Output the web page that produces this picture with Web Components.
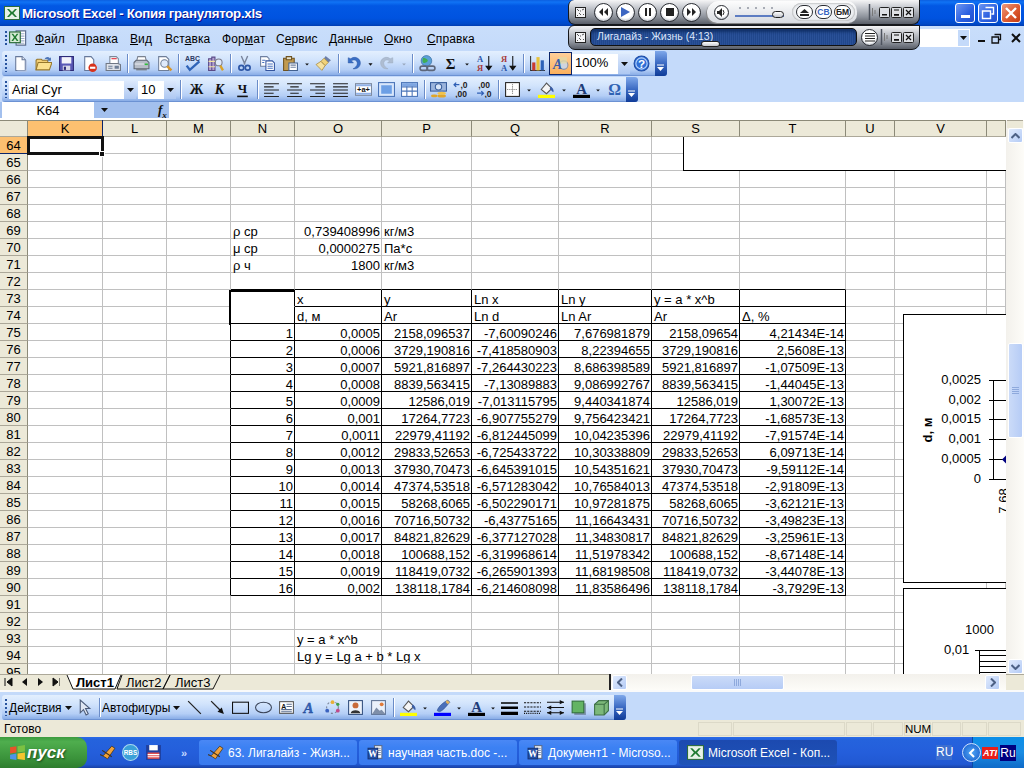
<!DOCTYPE html>
<html lang="ru"><head><meta charset="utf-8"><title>Excel</title>
<style>
html,body{margin:0;padding:0;width:1024px;height:768px;overflow:hidden;background:#C4DAFA}
body{font:12px "Liberation Sans",Arial,sans-serif;color:#000;display:flex;flex-direction:column;position:relative}
</style></head><body>
<x-titlebar>Microsoft Excel - Копия гранулятор.xls</x-titlebar>
<x-menubar>
 <x-menu-item w="42"><u>Ф</u>айл</x-menu-item><x-menu-item w="53"><u>П</u>равка</x-menu-item><x-menu-item w="35"><u>В</u>ид</x-menu-item><x-menu-item w="57">Вст<u>а</u>вка</x-menu-item><x-menu-item w="54">Фор<u>м</u>ат</x-menu-item><x-menu-item w="53">С<u>е</u>рвис</x-menu-item><x-menu-item w="55"><u>Д</u>анные</x-menu-item><x-menu-item w="43"><u>О</u>кно</x-menu-item><x-menu-item w="60"><u>С</u>правка</x-menu-item>
</x-menubar>
<x-toolband>
 <x-toolbar end="667">
  <x-tool i="new"></x-tool><x-tool i="open"></x-tool><x-tool i="save"></x-tool><x-tool i="perm"></x-tool><x-tool i="mail"></x-tool><x-sep w="6"></x-sep>
  <x-tool i="print"></x-tool><x-tool i="preview"></x-tool><x-sep w="5"></x-sep><x-tool i="spell"></x-tool><x-tool i="research"></x-tool><x-sep w="6"></x-sep>
  <x-tool i="cut"></x-tool><x-tool i="copy"></x-tool><x-tool i="paste"></x-tool><x-tool i="drop" w="10"></x-tool><x-tool i="brush"></x-tool><x-sep w="7"></x-sep>
  <x-tool i="undo"></x-tool><x-tool i="drop" w="11"></x-tool><x-tool i="redo"></x-tool><x-tool i="dropg" w="10"></x-tool><x-sep w="7"></x-sep>
  <x-tool i="link"></x-tool><x-tool i="sum"></x-tool><x-tool i="drop" w="10"></x-tool><x-tool i="az" w="25"></x-tool><x-tool i="za"></x-tool><x-sep w="6"></x-sep>
  <x-tool i="chart"></x-tool><x-tool i="draw" active></x-tool><x-combo w="58" aw="12" h="20">100%</x-combo><x-tool i="help"></x-tool>
 </x-toolbar>
 <x-toolbar end="638">
  <x-combo w="127" aw="12" h="18">Arial Cyr</x-combo><x-combo w="38" aw="12" h="18" style="margin-left:2px">10</x-combo><x-sep w="8"></x-sep>
  <x-tool i="bold" w="24"></x-tool><x-tool i="ital" w="22"></x-tool><x-tool i="under" w="24"></x-tool><x-sep w="6"></x-sep>
  <x-tool i="al"></x-tool><x-tool i="ac"></x-tool><x-tool i="ar"></x-tool><x-tool i="aj"></x-tool><x-tool i="merge"></x-tool><x-tool i="cur1"></x-tool><x-tool i="cur2"></x-tool><x-sep w="6"></x-sep>
  <x-tool i="money"></x-tool><x-tool i="inc"></x-tool><x-tool i="dec"></x-tool><x-sep w="5"></x-sep>
  <x-tool i="border"></x-tool><x-tool i="drop" w="10"></x-tool><x-tool i="fill" w="25"></x-tool><x-tool i="drop" w="10"></x-tool><x-tool i="color" w="24"></x-tool><x-tool i="drop" w="10"></x-tool><x-tool i="omega"></x-tool>
 </x-toolbar>
</x-toolband>
<x-formula>K64</x-formula>
<x-workarea><x-sheet></x-sheet><x-vscroll></x-vscroll></x-workarea>
<x-tabstrip></x-tabstrip>
<x-drawband>
 <x-toolbar end="626">
  <x-textbtn w="63">Дейс<u>т</u>вия<x-caret></x-caret></x-textbtn><x-tool i="pointer" w="24"></x-tool><x-sep w="6"></x-sep><x-textbtn w="81">Автофи<u>г</u>уры<x-caret></x-caret></x-textbtn>
  <x-tool i="line"></x-tool><x-tool i="arrow"></x-tool><x-tool i="rect"></x-tool><x-tool i="oval"></x-tool><x-tool i="textbox"></x-tool><x-tool i="wordart"></x-tool><x-tool i="diagram"></x-tool><x-tool i="clip"></x-tool><x-tool i="pic"></x-tool><x-sep w="6"></x-sep>
  <x-tool i="fill" w="24"></x-tool><x-tool i="drop" w="10"></x-tool><x-tool i="pen" w="24"></x-tool><x-tool i="drop" w="10"></x-tool><x-tool i="color" w="24"></x-tool><x-tool i="drop" w="10"></x-tool>
  <x-tool i="lw"></x-tool><x-tool i="dash"></x-tool><x-tool i="arrows"></x-tool><x-tool i="shadow"></x-tool><x-tool i="cube"></x-tool>
 </x-toolbar>
</x-drawband>
<x-statusbar>Готово</x-statusbar>
<x-taskbar>
 <x-task icon="winamp">63. Лигалайз - Жизн...</x-task><x-task icon="word">научная часть.doc -...</x-task><x-task icon="word">Документ1 - Microso...</x-task><x-task icon="excel" active>Microsoft Excel - Коп...</x-task>
</x-taskbar>
<x-player></x-player>
<script>
const I={
new:'<path d="M3.500 1.500h6l3 3v10h-9z" fill="#fff" stroke="#66789a"/><path d="M9.500 1.500v3h3" fill="#dfe6f2" stroke="#66789a"/><path d="M13.500 5v10H5" fill="none" stroke="#b5c4e0"/>',
open:'<path d="M1 14V5l1-1h4l1 1h5v2" fill="#f3cf76" stroke="#96772c"/><path d="M1 14l2-7h13l-2.500 7z" fill="#fbe08e" stroke="#96772c"/><path d="M9 4c1-2.500 3.500-3 5-1l1-1v3.500h-3.500l1-1c-1-1-2.500-1-3.500-.5z" fill="#4e76b8"/>',
save:'<path d="M1.500 1.500h13v13h-13z" fill="#5a58b6" stroke="#2c2a78"/><path d="M3.500 2h9v6h-9z" fill="#f2f2fa"/><path d="M4.500 10h7v4.500h-7z" fill="#d8d8e8"/><path d="M5.500 11h2v3h-2z" fill="#2c2a78"/>',
perm:'<path d="M3.500 1.500h6l2.500 3v5H9v5H3.500z" fill="#fff" stroke="#66789a"/><circle cx="11" cy="12" r="4" fill="#d8321c"/><path d="M8.500 11h5v2h-5z" fill="#fff"/>',
mail:'<path d="M5.500 1.500h6l2 2v5h-8z" fill="#fff" stroke="#7b8798"/><path d="M7 3.500h5" stroke="#d23" /><path d="M2 8h11l2.500 1v5.500h-13.500z" fill="#dfe3ea" stroke="#6f7784"/><path d="M4 10h4v1H4zM4 12h4v1H4zM10 10h4v3h-4z" fill="#6f7f97"/>',
print:'<path d="M4.500 1.500h7l1 4h-9z" fill="#fff" stroke="#7a8290"/><path d="M1 7l2-2h10l2 2v6H1z" fill="#b8bec8" stroke="#5f6672"/><path d="M3 13h10v1.500H3z" fill="#787f8a"/><path d="M11 8h3v1.500h-3z" fill="#2ec13b"/><path d="M1.500 8h9v1h-9z" fill="#e5e8ee"/>',
preview:'<path d="M2.500 1.500h7l2.500 2.500v10.500h-9.500z" fill="#fff" stroke="#6f7e98"/><circle cx="8" cy="8" r="3.500" fill="#dfeafb" stroke="#6f7e98"/><path d="M10.500 10.500l4 4" stroke="#d9962a" stroke-width="2.400"/>',
spell:'<text x="1" y="6" font-family="Liberation Sans" font-size="6.500" font-weight="700" fill="#2d3a63">ABC</text><path d="M2.500 10l3 4 9-8" fill="none" stroke="#2f63b7" stroke-width="2.200"/>',
research:'<path d="M1.500 3.500h3v11h-3zM4.500 2h3v12.500h-3z" fill="#b3a0d2" stroke="#5a4a86"/><path d="M1.500 6h6M1.500 11h6" stroke="#f4e7a1"/><circle cx="11" cy="7" r="3.200" fill="#dfeafb" stroke="#7b7b8a"/><path d="M12.500 10l2.500 4.500" stroke="#d9a22a" stroke-width="2.200"/>',
cut:'<path d="M5 1l3.500 8M11 1L7.500 9" stroke="#78839a" stroke-width="1.300"/><circle cx="5" cy="12" r="2.300" fill="none" stroke="#2e57a6" stroke-width="1.600"/><circle cx="11" cy="12" r="2.300" fill="none" stroke="#2e57a6" stroke-width="1.600"/>',
copy:'<path d="M1.500 1.500h6l2 2v7h-8z" fill="#fff" stroke="#6f80a0"/><path d="M6.500 5.500h6l2 2v7h-8z" fill="#fff" stroke="#33549e"/><path d="M8 8.500h5M8 10.500h5M8 12.500h5M3 5h3M3 7h2" stroke="#4a73c0"/>',
paste:'<path d="M1.500 3h10v11.500h-10z" fill="#c19a4f" stroke="#6f5320"/><path d="M4 1.500h5v3H4z" fill="#e7e3ce" stroke="#6f5320"/><path d="M6.500 7.500h8v7h-8z" fill="#fff" stroke="#42608f"/><path d="M8 9.500h5M8 11.500h5" stroke="#6f80a0"/>',
brush:'<path d="M10 1l5 4-2.500 2-4-4z" fill="#6d7fa8"/><path d="M8.500 3l4 4-3 3-4-4z" fill="#f0d27a" stroke="#9a7a2b" stroke-width=".6"/><path d="M5.500 6l4 4-3 4.500L1 9z" fill="#f6e2a0" stroke="#a58434" stroke-width=".7"/>',
undo:'<path d="M3 2.500v5h5L6 5.500c3-2 6 0 5.500 3-.3 2-2 3.500-4 4.500 4 .5 7-2 7-5.500 0-4.500-5.500-7-9-4z" fill="#3a6fc6" stroke="#28529a" stroke-width=".4"/>',
redo:'<path d="M13 2.500v5H8l2-2c-3-2-6 0-5.500 3 .3 2 2 3.500 4 4.500-4 .5-7-2-7-5.500 0-4.500 5.500-7 9-4z" fill="#aebdd2" stroke="#98a6bb" stroke-width=".4"/>',
link:'<circle cx="7" cy="5.500" r="5" fill="#5aa0d8" stroke="#33689c" stroke-width=".6"/><path d="M4 2.500c2 0 3 1 4 2s-1 3-3 3-2-3-1-5z" fill="#3fae54"/><g fill="none" stroke="#5c667a" stroke-width="1.500"><rect x="1" y="10.500" width="7" height="4" rx="2"/><rect x="7.500" y="10.500" width="7.500" height="4" rx="2"/></g>',
sum:'<text x="8" y="13.500" text-anchor="middle" font-family="Liberation Serif" font-size="14" font-weight="700" fill="#111">Σ</text>',
az:'<text x="1" y="7" font-family="Liberation Serif" font-size="8" font-weight="700" fill="#2a55a8">А</text><text x="1" y="15" font-family="Liberation Serif" font-size="8" font-weight="700" fill="#a83a3a">Я</text><path d="M12 1v12M9.500 10.500L12 14l2.500-3.500z" fill="#111" stroke="#111"/>',
za:'<text x="1" y="7" font-family="Liberation Serif" font-size="8" font-weight="700" fill="#a83a3a">Я</text><text x="1" y="15" font-family="Liberation Serif" font-size="8" font-weight="700" fill="#2a55a8">А</text><path d="M12 1v12M9.500 10.500L12 14l2.500-3.500z" fill="#111" stroke="#111"/>',
chart:'<path d="M1.500 1v13.500H15" fill="none" stroke="#333"/><path d="M3 7h3v7.500H3z" fill="#c93a2e"/><path d="M7 2h3v12.500H7z" fill="#e8c23a"/><path d="M11 5h3v9.500h-3z" fill="#2d62b8"/>',
draw:'<circle cx="11" cy="9.500" r="4" fill="#cfd4df" stroke="#8c93a5"/><path d="M6 2h8v6H6z" fill="#e3d9a8" opacity=".8"/><text x="1" y="13.500" font-family="Liberation Serif" font-size="13" font-weight="700" font-style="italic" fill="#3a5ea8">A</text>',
help:'<circle cx="8" cy="8" r="7" fill="#2f6fd6" stroke="#1c4aa3"/><circle cx="8" cy="8" r="5.300" fill="none" stroke="#bcd6fa"/><text x="8" y="12" text-anchor="middle" font-family="Liberation Sans" font-size="11" font-weight="700" fill="#fff">?</text>',
bold:'<text x="8" y="12.500" text-anchor="middle" font-family="Liberation Serif" font-size="13" font-weight="700" fill="#111">Ж</text>',
ital:'<text x="8" y="12.500" text-anchor="middle" font-family="Liberation Serif" font-size="13" font-weight="700" font-style="italic" fill="#111">К</text>',
under:'<text x="8" y="11.500" text-anchor="middle" font-family="Liberation Serif" font-size="12" font-weight="700" fill="#111">Ч</text><path d="M3 14.500h10" stroke="#111" stroke-width="1.500"/>',
al:'<path d="M1 2.500h14M1 5.500h9M1 8.500h14M1 11.500h9M1 14.500h14" stroke="#222"/>',
ac:'<path d="M1 2.500h14M4 5.500h8M1 8.500h14M4 11.500h8M1 14.500h14" stroke="#222"/>',
ar:'<path d="M1 2.500h14M6 5.500h9M1 8.500h14M6 11.500h9M1 14.500h14" stroke="#222"/>',
aj:'<path d="M1 2.500h14M1 5.500h14M1 8.500h14M1 11.500h14M1 14.500h14" stroke="#222"/>',
merge:'<rect x=".5" y="2.500" width="15" height="11" fill="#fff" stroke="#7d8aa0"/><path d="M1 3h14v2H1zM1 11h14v2H1z" fill="#8fb0e6"/><text x="8" y="10.500" text-anchor="middle" font-family="Liberation Sans" font-size="7" font-weight="700" fill="#111">+a+</text>',
cur1:'<rect x=".5" y="1.500" width="15" height="13" fill="#d7e6fb" stroke="#4a74b8"/><path d="M3 4h10v8H3z" fill="#6c9fe5"/>',
cur2:'<rect x=".5" y="1.500" width="15" height="13" fill="#fff" stroke="#4a74b8"/><path d="M1 5.500h14M1 9.500h14M5.500 2v12M10.500 2v12" stroke="#4a74b8"/><path d="M1 2h14v3H1z" fill="#7ea6e2"/>',
money:'<rect x=".5" y="1.500" width="15" height="8" fill="#9bb4dc" stroke="#3a5f9e"/><circle cx="8" cy="5.500" r="3" fill="#d9e6f8" stroke="#3a5f9e"/><ellipse cx="11" cy="14" rx="4" ry="1.500" fill="#e1a62a"/><ellipse cx="11" cy="11.500" rx="4" ry="1.500" fill="#f3c34a"/><ellipse cx="4" cy="14" rx="3" ry="1.200" fill="#e1a62a"/>',
inc:'<text x="7" y="7" font-family="Liberation Sans" font-size="8" font-weight="700" fill="#222">,0</text><text x="2" y="15" font-family="Liberation Sans" font-size="8" font-weight="700" fill="#222">,00</text><path d="M6 3.500H1M3 1.500L1 3.500l2 2" fill="none" stroke="#2f5fb5" stroke-width="1.200"/>',
dec:'<text x="2" y="7" font-family="Liberation Sans" font-size="8" font-weight="700" fill="#222">,00</text><text x="8" y="15" font-family="Liberation Sans" font-size="8" font-weight="700" fill="#222">,0</text><path d="M1 11.500h6M5 9.500l2 2-2 2" fill="none" stroke="#2f5fb5" stroke-width="1.200"/>',
border:'<rect x="1.500" y="1.500" width="13" height="13" fill="#fff" stroke="#222"/><path d="M8 3v10M3 8h10" stroke="#777" stroke-dasharray="1 1"/>',
fill:'<path d="M3 8l5-6 5 5-5 5z" fill="#f5f5f5" stroke="#555"/><path d="M12 5c2 2 3 3 2.500 5.500-1.500-1-2.500-2-3.500-3.500z" fill="#3a5ea8"/><path d="M0 13h16v3H0z" fill="#ffff00"/>',
pen:'<path d="M3 11c1-4 6-8 10-10l2 2c-3 3-6 8-10 9z" fill="#4a6fb8" stroke="#2a4a8c" stroke-width=".5"/><path d="M12 1l3 2-2 2-2-2z" fill="#e4b45c"/><path d="M0 13h16v3H0z" fill="#0000ff"/>',
color:'<text x="8" y="12" text-anchor="middle" font-family="Liberation Serif" font-size="14" font-weight="700" fill="#1f3c78">A</text><path d="M0 13h16v3H0z" fill="#000"/>',
omega:'<text x="8" y="13.500" text-anchor="middle" font-family="Liberation Serif" font-size="15" font-weight="700" fill="#2f62b3">Ω</text>',
drop:'<path d="M2 6h6L5 9.500z" fill="#111" transform="translate(3 1)"/>',
dropg:'<path d="M2 6h6L5 9.500z" fill="#98a6bb" transform="translate(3 1)"/>',
pointer:'<path d="M4 1v12l3-3 2.500 5 2-1L9 9h4z" fill="#dfe6f2" stroke="#4a5a78"/>',
line:'<path d="M2 2l12 12" stroke="#222" stroke-width="1.200"/>',
arrow:'<path d="M2 2l10 10" stroke="#222" stroke-width="1.200"/><path d="M14 14l-6-2 4-4z" fill="#111"/>',
rect:'<rect x=".5" y="3" width="15" height="10.500" fill="none" stroke="#111"/>',
oval:'<ellipse cx="8" cy="8" rx="7.500" ry="5" fill="none" stroke="#3a4458"/>',
textbox:'<rect x="1.500" y="2.500" width="13" height="11" fill="#fff" stroke="#555"/><text x="3" y="9" font-family="Liberation Sans" font-size="6.500" font-weight="700" fill="#111">A</text><path d="M8 5h5M8 7h5M3 10h10M3 12h10" stroke="#5a6d8f"/>',
wordart:'<text x="7" y="13.500" text-anchor="middle" font-family="Liberation Serif" font-size="14" font-weight="700" font-style="italic" fill="#3463bb" stroke="#1a3f88" stroke-width=".3">A</text>',
diagram:'<circle cx="8" cy="8" r="5.500" fill="none" stroke="#7a8598" stroke-dasharray="2 2"/><circle cx="8" cy="3" r="1.800" fill="#e8b13a"/><circle cx="3" cy="11" r="1.800" fill="#3a62c0"/><circle cx="13" cy="11" r="1.800" fill="#c04a8a"/><circle cx="13" cy="5" r="1.500" fill="#3ea04a"/>',
clip:'<rect x="1.500" y="1.500" width="13" height="13" fill="#eef3fb" stroke="#34507f"/><circle cx="8" cy="6" r="2.800" fill="#c86a3a"/><path d="M3.500 13.500c0-4 9-4 9 0z" fill="#333"/>',
pic:'<rect x="1.500" y="1.500" width="13" height="13" fill="#eaf1fb" stroke="#5f7395"/><circle cx="11" cy="5" r="1.800" fill="#e07a3a"/><path d="M2 14l4-6 3 3 2-1 3.500 4z" fill="#7e8ea8"/>',
lw:'<path d="M0 3h16v1.500H0zM0 7h16v2.500H0zM0 12h16v3H0z" fill="#000"/>',
dash:'<path d="M0 3.500h16M0 7.500h16M0 11.500h16" stroke="#111" stroke-dasharray="2 1"/><path d="M0 13.500h16" stroke="#111" stroke-dasharray="1 1"/>',
arrows:'<path d="M0 3h16M0 8h16M0 13h16" stroke="#111"/><path d="M16 3l-4-2v4zM0 8l4-2v4zM0 13l4-2v4zM16 13l-4-2v4z" fill="#111"/>',
shadow:'<rect x="4" y="4" width="11" height="11" fill="#55667a" opacity=".6"/><rect x="2" y="2" width="11" height="11" fill="#63b463" stroke="#326f3a"/>',
cube:'<path d="M1.500 5l4-3.500h9V11l-4 4h-9z" fill="#7cb87a" stroke="#3c6f45"/><path d="M1.500 5h9v10M10.500 5l4-3.500" fill="none" stroke="#3c6f45"/>',
excel:'<rect x=".5" y="1.500" width="15" height="13" fill="#e7f2e7" stroke="#2d6c3a"/><path d="M3 4h2l3 3 3-3h2L9.500 8l3.500 4h-2L8 9l-3 3H3l3.500-4z" fill="#1f7a30"/>',
excelDoc:'<path d="M6 1.500h8v12H6z" fill="#fff" stroke="#5d6f90"/><path d="M9 4h4M9 6h4M9 8h4M9 10h4M7 12h6" stroke="#9fb0cc"/><rect x=".5" y="2.500" width="9" height="9" fill="#d8ecd8" stroke="#2d6c3a"/><path d="M2 4h1.500L5 6l1.500-2H8L5.800 7 8 10H6.500L5 8l-1.500 2H2l2.200-3z" fill="#1f7a30"/>',
word:'<path d="M7 1.500h7v12H7z" fill="#fff" stroke="#5d6f90"/><path d="M9 4h4M9 6h4M9 8h4M9 10h4" stroke="#7d90b0"/><rect x="1" y="4" width="9" height="10" fill="#2450a8" stroke="#163576"/><text x="5.500" y="12" text-anchor="middle" font-family="Liberation Serif" font-size="9" font-weight="700" fill="#fff">W</text>',
winamp:'<path d="M1 10l3 1 8-9 3 2-7 10-3-2z" fill="#f0a23a" stroke="#40301a" stroke-width=".7"/><path d="M3 6l9 6" stroke="#40301a"/>'
};
const svg=(n,s=17)=>`<svg width="${s}" height="${s}" viewBox="0 0 16 16" aria-hidden="true">${I[n]||''}</svg>`;
function def(name,render){customElements.define(name,class extends HTMLElement{connectedCallback(){if(this.shadowRoot)return;this.attachShadow({mode:'open'}).innerHTML=render(this)}})}
const winBtn=(bg,g)=>`<span style="width:20px;height:20px;box-sizing:border-box;margin-left:3px;border-radius:3px;border:1px solid #fff;background:${bg};display:flex;align-items:center;justify-content:center">${g}</span>`;
def('x-titlebar',()=>`<style>:host{display:flex;align-items:center;height:26px;flex:none;background:linear-gradient(#0c5fe0 0,#1073f5 8%,#0258e4 22%,#0053e0 70%,#0049c8 92%,#003cb0);color:#fff;font:700 13.300px "Liberation Sans",sans-serif;box-sizing:border-box;padding:0 3px 0 4px;text-shadow:1px 1px #0f1089}
.t{margin-left:2px;letter-spacing:-.3px;flex:1;white-space:nowrap}.b{display:flex;margin-top:-1px}</style>
${svg('excel',16)}<span class="t"><slot></slot></span><span class="b">${winBtn('linear-gradient(135deg,#6e96f2,#2a5fe0 60%,#2350cc)','<svg width="11" height="13"><path d="M1 9h9v3H1z" fill="#fff"/></svg>')}${winBtn('linear-gradient(135deg,#6e96f2,#2a5fe0 60%,#2350cc)','<svg width="14" height="14"><path d="M4.500 1.500h8v6.500h-2M1.500 5h8v7.500h-8z" fill="none" stroke="#fff" stroke-width="1.400"/></svg>')}${winBtn('linear-gradient(135deg,#ee9a7e,#dd5a30 55%,#c33b13)','<svg width="14" height="14"><path d="M2 2l10 10M12 2L2 12" stroke="#fff" stroke-width="2.400"/></svg>')}</span>`);
def('x-menubar',()=>`<style>:host{display:flex;align-items:center;height:25px;flex:none;box-sizing:border-box;background:linear-gradient(#c9defb,#c4dafa);padding-left:5px;position:relative}
.g{width:2px;height:15px;background:repeating-linear-gradient(#26539e 0 2px,transparent 2px 4px);margin-right:2px}
.ico{width:26px;display:flex}.r{position:absolute;left:920px;top:3px;display:flex;align-items:center}
.c{width:50px;height:18px;background:#fff;display:flex;justify-content:flex-end;box-sizing:border-box;border:1px solid #fff}.a{width:11px;background:#c4dafa;display:flex;align-items:center;justify-content:center}
.m{margin-left:7px;display:flex;align-items:center}</style>
<span class="g"></span><span class="ico">${svg('excelDoc',19)}</span><slot></slot>
<span class="r"><span class="c"><span class="a"><svg width="7" height="4"><path d="M0 0h7L3.500 4z" fill="#111"/></svg></span></span>
<span class="m"><svg width="9" height="10"><path d="M1 7h7v2H1z" fill="#111"/></svg><svg width="11" height="11" style="margin-left:5px"><path d="M3.500 1.500h6v5h-2M1 4h6.500v6H1z" fill="none" stroke="#111" stroke-width="1.300"/></svg><svg width="12" height="12" style="margin-left:8px"><path d="M2 2l8 8M10 2l-8 8" stroke="#111" stroke-width="2"/></svg></span></span>`);
def('x-menu-item',e=>`<style>:host{display:block;flex:none;width:${e.getAttribute('w')}px;font:12px "Liberation Sans",sans-serif;color:#000;white-space:nowrap;letter-spacing:.1px}</style><slot></slot>`);
def('x-toolband',()=>`<style>:host{display:flex;flex-direction:column;gap:1px;flex:none;height:51px;padding:0;box-sizing:border-box}</style><slot></slot>`);
const chev=`<svg width="8" height="8" style="margin-top:auto;margin-bottom:4px"><path d="M0 1h7" stroke="#fff"/><path d="M0 3h7L3.500 7z" fill="#fff"/></svg>`;
def('x-toolbar',e=>{const w=+e.getAttribute('end')-2;return `<style>:host{display:flex;align-items:center;width:${w}px;height:25px;margin-left:2px;box-sizing:border-box;background:linear-gradient(#e3effe,#d2e4fc 35%,#b4cef6 75%,#8db0e8 94%,#5b83c8);border-radius:3px;position:relative;flex:none}
.g{width:2px;height:17px;margin:0 2px 0 3px;background:repeating-linear-gradient(#27539e 0 2px,transparent 2px 4px);flex:none}
.e{margin-left:auto;width:12px;height:100%;background:linear-gradient(#7fa8ea,#3a69c2 50%,#103c98);border-radius:0 3px 3px 0;display:flex;flex-direction:column;align-items:center}
.s{display:flex;align-items:center;flex:1;min-width:0}</style><span class="g"></span><span class="s"><slot></slot></span><span class="e">${chev}</span>`});
def('x-tool',e=>{const w=e.getAttribute('w')||23,a=e.hasAttribute('active');return `<style>:host{display:flex;align-items:center;justify-content:center;width:${w}px;height:23px;flex:none;box-sizing:border-box;${a?'background:linear-gradient(#ffd09a,#fbb05c);border:1px solid #0a246a;':''}}</style>${svg(e.getAttribute('i'),e.getAttribute('i').startsWith('drop')?12:17)}`});
def('x-sep',e=>`<style>:host{display:flex;justify-content:center;width:${e.getAttribute('w')}px;height:19px;flex:none}i{width:1px;background:#6a8cc8;box-shadow:1px 0 #fff}</style><i></i>`);
def('x-combo',e=>{const w=e.getAttribute('w'),a=e.getAttribute('aw'),h=e.getAttribute('h');return `<style>:host{display:flex;width:${w}px;height:${h}px;flex:none;background:#fff;box-sizing:border-box;font:13px "Liberation Sans",sans-serif;color:#000}
.t{flex:1;padding:1px 0 0 3px;white-space:nowrap;overflow:hidden;line-height:16px}.a{width:${a}px;background:linear-gradient(#dbe8fc,#aec8f2);display:flex;align-items:center;justify-content:center}</style>
<span class="t"><slot></slot></span><span class="a"><svg width="7" height="4"><path d="M0 0h7L3.500 4z" fill="#111"/></svg></span>`});
def('x-textbtn',e=>`<style>:host{display:flex;align-items:center;width:${e.getAttribute('w')}px;flex:none;font:12px "Liberation Sans",sans-serif;white-space:nowrap}</style><slot></slot>`);
def('x-caret',()=>`<style>:host{display:inline-flex;margin-left:3px}</style><svg width="7" height="4"><path d="M0 0h7L3.500 4z" fill="#111"/></svg>`);
def('x-formula',()=>`<style>:host{display:flex;height:18px;flex:none;background:#fff;font:13px "Liberation Sans",sans-serif}
.l{width:2px;background:#a3c0ee;height:16px}.n{width:92px;text-align:center;line-height:17px}
.d{width:75px;display:flex;align-items:center;background:#a3c0ee;height:16px;box-sizing:border-box}.d svg:first-child{margin-left:6px}
.fx{margin-left:49px;font:italic 700 13px "Liberation Serif",serif;color:#111;line-height:14px}sub{font-size:9px;line-height:0}</style>
<span class="l"></span><span class="n"><slot></slot></span><span class="d"><svg width="9" height="5"><path d="M1 0h7L4.500 4z" fill="#111"/></svg><span class="fx">f<sub>x</sub></span></span>`);
def('x-workarea',()=>`<style>:host{display:flex;height:554px;flex:none;background:#fff}</style><slot></slot>`);
const D=`1|0,0005|2158,096537|-7,60090246|7,676981879|2158,09654|4,21434E-14
2|0,0006|3729,190816|-7,418580903|8,22394655|3729,190816|2,5608E-13
3|0,0007|5921,816897|-7,264430223|8,686398589|5921,816897|-1,07509E-13
4|0,0008|8839,563415|-7,13089883|9,086992767|8839,563415|-1,44045E-13
5|0,0009|12586,019|-7,013115795|9,440341874|12586,019|1,30072E-13
6|0,001|17264,7723|-6,907755279|9,756423421|17264,7723|-1,68573E-13
7|0,0011|22979,41192|-6,812445099|10,04235396|22979,41192|-7,91574E-14
8|0,0012|29833,52653|-6,725433722|10,30338809|29833,52653|6,09713E-14
9|0,0013|37930,70473|-6,645391015|10,54351621|37930,70473|-9,59112E-14
10|0,0014|47374,53518|-6,571283042|10,76584013|47374,53518|-2,91809E-13
11|0,0015|58268,6065|-6,502290171|10,97281875|58268,6065|-3,62121E-13
12|0,0016|70716,50732|-6,43775165|11,16643431|70716,50732|-3,49823E-13
13|0,0017|84821,82629|-6,377127028|11,34830817|84821,82629|-3,25961E-13
14|0,0018|100688,152|-6,319968614|11,51978342|100688,152|-8,67148E-14
15|0,0019|118419,0732|-6,265901393|11,68198508|118419,0732|-3,44078E-13
16|0,002|138118,1784|-6,214608098|11,83586496|138118,1784|-3,7929E-13`.split('\n').map(s=>s.split('|'));
def('x-sheet',()=>{
 const cols='KLMNOPQRSTUVW'.split(''),W=[75,64,64,64,87,90,87,93,88,106,49,92,19];
 const cell={N69:['ρ ср'],O69:['0,739408996',1],P69:['кг/м3'],N70:['μ ср'],O70:['0,0000275',1],P70:['Па*с'],N71:['ρ ч'],O71:['1800',1],P71:['кг/м3'],
 O73:['x'],P73:['y'],Q73:['Ln x'],R73:['Ln y'],S73:['y = a * x^b'],O74:['d, м'],P74:['Ar'],Q74:['Ln d'],R74:['Ln Ar'],S74:['Ar'],T74:['Δ, %'],O93:['y = a * x^b'],O94:['Lg y = Lg a + b * Lg x']};
 D.forEach((r,i)=>'NOPQRST'.split('').forEach((c,j)=>cell[c+(75+i)]=[r[j],1]));
 const box=(c,r)=>c>='N'&&c<='T'&&r>=73&&r<=90;
 let h=`<div class="h top c0"></div>`+cols.map(c=>`<div class="h top ${c=='K'?'on':''}">${c=='W'?'':c}</div>`).join('');
 for(let r=64;r<=95;r++){
  h+=`<div class="h rh ${r==64?'on':''}">${r}</div>`;
  cols.forEach((c,i)=>{
   const v=cell[c+r],next=cols[i+1],k=[];
   if(box(c,r)||(next&&box(next,r)))k.push('br');
   if(box(c,r+1)||(box(c,r)&&r>=74))k.push('bb');
   if(c=='N'&&r==73)k.push('nb');
   if(v&&v[1])k.push('R');
   h+=`<div class="x ${k.join(' ')}">${v?v[0]:''}</div>`;
  });
 }
 return `<style>:host{display:block;width:1006px;height:554px;flex:none;overflow:hidden;position:relative;background:#fff}
.g{display:grid;grid-template-columns:28px ${W.map(x=>x+'px').join(' ')};grid-auto-rows:17px;font:13px "Liberation Sans",Arial,sans-serif;color:#000}
.h{background:#ece9d8;border-right:1px solid #8c8a78;border-bottom:1px solid #aca899;box-sizing:border-box;text-align:center;line-height:18px}
.top{box-shadow:inset 0 1px #8c8a78}
.rh{border-right:1px solid #8c8a78;border-bottom:1px solid #aca899}
.on{background:#fdc070;border-right-color:#0a246a;border-bottom-color:#0a246a}
.x{box-sizing:border-box;border-right:1px solid #c0c0c0;border-bottom:1px solid #c0c0c0;padding:2px 1px 0 2px;line-height:16px;white-space:nowrap}
.R{text-align:right}.br{border-right-color:#000}.bb{border-bottom-color:#000}.nb{border-bottom-color:#fff}
.o{position:absolute;box-sizing:border-box}
.sel{left:27px;top:16px;width:77px;height:19px;border:3px solid #111}
.hd{left:99px;top:31px;width:6px;height:6px;background:#111;border:1px solid #fff}
.med{left:229px;top:170px;width:66px;height:35px;border-left:2px solid #000;border-top:2px solid #000}
.shape{left:683px;top:17px;width:330px;height:34px;background:#fff;border:1px solid #000;border-top:0}
.ch{left:903px;background:#fff;border:1px solid #000;overflow:hidden;width:110px}
.ch1{top:194px;height:269px}.ch2{top:468px;height:100px}
.l{position:absolute;white-space:nowrap;font:13px "Liberation Sans",Arial,sans-serif;line-height:16px}
.dm{font-weight:700;transform:rotate(-90deg);transform-origin:center}
svg{position:absolute;left:0;top:0}
</style><div class="g">${h}</div>
<div class="o sel"></div><div class="o hd"></div><div class="o med"></div><div class="o shape"></div>
<div class="o ch ch1"><svg width="110" height="269"><path d="M89.500 65V165M85 65.500h20M85 85.500h20M85 104.500h20M85 124.500h20M85 144.500h20M85 164.500h20" fill="none" stroke="#000"/><path d="M102 140.500l4 4-4 4-4-4z" fill="#000080"/></svg>
 <span class="l" style="right:31px;top:57px">0,0025</span><span class="l" style="right:31px;top:77px">0,002</span><span class="l" style="right:31px;top:96px">0,0015</span><span class="l" style="right:31px;top:116px">0,001</span><span class="l" style="right:31px;top:136px">0,0005</span><span class="l" style="right:31px;top:156px">0</span>
 <span class="l dm" style="left:12px;top:107px">d, м</span><span class="l" style="left:87px;top:178px;transform:rotate(-90deg)">7,68</span></div>
<div class="o ch ch2"><svg width="110" height="100"><path d="M75.500 61V100M71 61.500h35M75 66.500h31M75 72.500h31M75 77.500h31M75 83.500h31" fill="none" stroke="#000"/></svg>
 <span class="l" style="left:61px;top:33px">1000</span><span class="l" style="left:40px;top:53px">0,01</span></div>`});
const sb=(d)=>`<span class="btn">${{u:'<svg width="9" height="6"><path d="M.5 5L4.500 1l4 4" fill="none" stroke="#4d6185" stroke-width="2"/></svg>',d:'<svg width="9" height="6"><path d="M.5 1l4 4 4-4" fill="none" stroke="#4d6185" stroke-width="2"/></svg>',l:'<svg width="6" height="9"><path d="M5 .5l-4 4 4 4" fill="none" stroke="#4d6185" stroke-width="2"/></svg>',r:'<svg width="6" height="9"><path d="M1 .5l4 4-4 4" fill="none" stroke="#4d6185" stroke-width="2"/></svg>'}[d]}</span>`;
const sbCss=`.btn{display:flex;align-items:center;justify-content:center;box-sizing:border-box;width:15px;height:15px;flex:none;border:1px solid #fff;border-radius:2px;background:linear-gradient(135deg,#e1ebfd,#b4cbf5)}
.th{box-sizing:border-box;border:1px solid #fff;border-radius:2px;display:flex;align-items:center;justify-content:center;flex:none}`;
def('x-vscroll',()=>`<style>:host{display:flex;flex-direction:column;align-items:center;width:18px;height:554px;flex:none;background:linear-gradient(90deg,#f3f1ec,#fdfcf8);box-sizing:border-box}
${sbCss}.sp{height:8px;width:16px;border-top:1px solid #aca899;background:#ece9d8;box-sizing:border-box}
.th{width:15px;height:95px;margin-top:200px;background:linear-gradient(90deg,#cbdbf8,#b6ccf6)}.sv{margin-top:auto}</style>
<span class="sp"></span>${sb('u')}<span class="th"><svg width="7" height="7"><path d="M0 .5h7M0 2.500h7M0 4.500h7M0 6.500h7" stroke="#8ea9dc"/></svg></span><span class="sv" style="display:block">${sb('d')}</span>`);
def('x-tabstrip',()=>`<style>:host{display:flex;align-items:center;height:16px;flex:none;background:#ece9d8;position:relative;font:13px "Liberation Sans",sans-serif;overflow:hidden;box-shadow:inset 0 1px #aca899}
${sbCss}.nav{display:flex;width:66px;padding-left:4px;box-sizing:border-box;flex:none}.nav svg{margin-right:6px}
svg.t{position:absolute;left:0;top:0}
.tab{position:relative;white-space:nowrap}.a{margin-left:10px;font-weight:700;width:50px}.b{width:49px}.c{width:40px}
.hs{position:absolute;left:609px;top:0;width:397px;height:16px;display:flex;align-items:center;border-left:2px solid #222;background:linear-gradient(#f3f1ec,#fdfcf8);box-sizing:border-box;padding-left:1px}
.th{width:93px;height:15px;margin-left:64px;background:linear-gradient(#cbdbf8,#b6ccf6)}.hs .e{margin-left:auto;margin-right:6px}</style>
<svg class="t" width="230" height="16"><path d="M73 15l-6-14h54l-6 14z" fill="#fff"/><path d="M122 1l-5 14h46l7-14" fill="none" stroke="#111"/><path d="M170 1l-7 14h50l7-14" fill="none" stroke="#111"/><path d="M67 1l6 14h42l6-14" fill="#fff" stroke="#111"/></svg>
<span class="nav"><svg width="10" height="10"><path d="M1 1v8M8 1L3 5l5 4z" fill="#111" stroke="#111"/></svg><svg width="10" height="10"><path d="M7 1L2 5l5 4z" fill="#111"/></svg><svg width="10" height="10"><path d="M3 1l5 4-5 4z" fill="#111"/></svg><svg width="10" height="10"><path d="M9 1v8M2 1l5 4-5 4z" fill="#111" stroke="#111"/></svg></span>
<span class="tab a">Лист1</span><span class="tab b">Лист2</span><span class="tab c">Лист3</span>
<span class="hs">${sb('l')}<span class="th"><svg width="7" height="7"><path d="M.5 0v7M2.500 0v7M4.500 0v7M6.500 0v7" stroke="#8ea9dc"/></svg></span><span class="e" style="display:block">${sb('r')}</span></span>`);
def('x-drawband',()=>`<style>:host{display:block;height:30px;flex:none;box-sizing:border-box;padding-top:3px;background:#c4dafa;border-top:2px solid #fafafa}</style><slot></slot>`);
def('x-statusbar',()=>{const P=[[34],[112],[26],[30],[27,'NUM'],[29],[25],[33]];
 return `<style>:host{display:flex;align-items:center;height:17px;flex:none;background:#ece9d8;font:12px "Liberation Sans",sans-serif;padding-left:4px;box-sizing:border-box;position:relative}
.p{margin-left:auto;display:flex;gap:1px;margin-right:3px}.p span{height:14px;box-sizing:border-box;border:1px solid #dcd9c8;font-size:11.500px;line-height:13px;text-align:center}</style>
<slot></slot><span class="p">${P.map(p=>`<span style="width:${p[0]}px">${p[1]||''}</span>`).join('')}</span>`});
def('x-taskbar',()=>`<style>:host{display:flex;align-items:center;height:31px;flex:none;background:linear-gradient(#2a6ae8 0,#2563dd 8%,#245edb 50%,#2158d2 88%,#1941a5);position:relative;overflow:hidden;font:12px "Liberation Sans",sans-serif;color:#fff}
.st{width:87px;height:31px;flex:none;border-radius:0 10px 10px 0;background:linear-gradient(#3b9a3f,#4fae4e 15%,#3a923a 70%,#2e7d2e);display:flex;align-items:center;gap:1px;padding-left:9px;box-sizing:border-box;font:italic 700 17px "Liberation Sans",sans-serif;text-shadow:1px 1px 2px #1c4a1c}
.q{display:flex;gap:6px;margin-left:12px;width:100px;flex:none;align-items:center}.q span:last-child{margin-left:13px;font:700 11px "Liberation Sans",sans-serif;color:#c4d8ff}
.tasks{display:flex;gap:2px;align-items:center}
.ru{position:absolute;left:936px;top:8px;width:16px;height:15px;background:#3c6fd0;font-size:12px;line-height:15px;text-align:center}
.tray{position:absolute;left:972px;top:0;width:52px;height:31px;background:linear-gradient(#0c8fe8,#1a8ce3 50%,#0e6ac8);border-left:1px solid #0a4aa6;box-sizing:border-box;display:flex;align-items:center}
.ci{position:absolute;left:962px;top:6px;width:19px;height:19px;border-radius:50%;background:radial-gradient(#4fa5f5,#1559c9);border:1px solid #cfe3ff;box-sizing:border-box;display:flex;align-items:center;justify-content:center;z-index:1}
.ati{margin-left:9px;width:16px;height:12px;background:#e8201a;font:italic 700 9px "Liberation Sans",sans-serif;text-align:center;line-height:12px}.r{margin-left:2px;width:16px;height:16px;background:#000080;font-size:12px;line-height:16px;text-align:center}</style>
<span class="st"><svg width="17" height="17" viewBox="0 0 16 16"><path d="M1 3l6-1v6l-6 1z" fill="#e8532a"/><path d="M8 2l7-1v6l-7 1z" fill="#7cc142"/><path d="M1 10l6-1v6l-6-1z" fill="#4f93e8"/><path d="M8 9l7-1v7l-7-1z" fill="#f5c52e"/></svg>пуск</span>
<span class="q">${svg('winamp',17)}<svg width="17" height="17" viewBox="0 0 16 16"><circle cx="8" cy="8" r="7.500" fill="#3aa0d8" stroke="#a8d8f0"/><text x="8" y="10.500" text-anchor="middle" font-family="Liberation Sans" font-size="6" font-weight="700" fill="#fff">RBS</text></svg><svg width="17" height="17" viewBox="0 0 16 16"><path d="M1 1h14v14H1z" fill="#1f3f9e"/><path d="M4 1h8v5H4z" fill="#fff"/><path d="M2.500 8h11v6h-11z" fill="#e05050"/><path d="M2.500 10h11M2.500 12h11" stroke="#fff"/></svg><span>»</span></span>
<span class="tasks"><slot></slot></span><span class="ru">RU</span><span class="ci"><svg width="8" height="10"><path d="M6 1L2 5l4 4" fill="none" stroke="#fff" stroke-width="2"/></svg></span><span class="tray"><span class="ati">ATI</span><span class="r">Ru</span></span>`);
def('x-task',e=>{const a=e.hasAttribute('active');return `<style>:host{display:flex;align-items:center;gap:4px;width:158px;height:25px;box-sizing:border-box;padding-left:8px;border-radius:3px;flex:none;color:#fff;white-space:nowrap;font:12px "Liberation Sans",sans-serif;background:${a?'linear-gradient(#1c4ab0,#1e52b7)':'linear-gradient(#4a88f5,#3c81f3 30%,#3a7aee)'}}</style>${svg(e.getAttribute('icon'),17)}<slot></slot>`});
const rb=(c,s=19)=>`<span style="width:${s}px;height:${s}px;border-radius:50%;flex:none;display:flex;align-items:center;justify-content:center;background:radial-gradient(circle at 50% 40%,#fff 55%,#c8ccd4 75%,#6d7480);border:1.500px solid #2a2d33;box-sizing:border-box">${c}</span>`;
const mi=(p)=>`<svg width="11" height="11" style="flex:none"><rect x=".5" y=".5" width="10" height="10" rx="1" fill="#dfe1e5" stroke="#222"/>${p}</svg>`;
const mm=()=>mi('<path d="M3 7h5v1.500H3z" fill="#111"/>'),mh=()=>mi('<path d="M3 3h5M3 8h5" stroke="#111"/><path d="M3 7h5v1.500H3z" fill="#111"/>'),mx=()=>mi('<path d="M3 3l5 5M8 3l-5 5" stroke="#111" stroke-width="1.200"/>');
const grip=`<svg width="10" height="16" style="flex:none"><path d="M1.500 0v16" stroke="#4c525d" stroke-width="1.500"/><path d="M4.500 4v8" stroke="#777"/><path d="M7 6v4" stroke="#777"/></svg>`;
const sys=`<svg width="11" height="11" style="flex:none"><rect x=".5" y=".5" width="10" height="10" fill="#f3f3f5" stroke="#222"/><path d="M2 2l2 2M7 3l2-1M4 6l2 2M8 7l1 1M2 8l1 1M5 4h1" stroke="#555"/></svg>`;
def('x-player',()=>`<style>:host{position:absolute;left:568px;top:0;width:352px;height:50px;display:flex;flex-direction:column;font:12px "Liberation Sans",sans-serif}
.w{height:25px;box-sizing:border-box;border:1px solid #16181c;border-top:0;border-radius:6px 0 8px 7px;background:linear-gradient(#f5f5f6,#c8cbd1 30%,#8e939c 70%,#585d67);display:flex;align-items:center;position:relative;flex:none;padding-left:6px}
.b{height:25px;border-top:1px solid #16181c}
.rb{display:flex;gap:3px;margin-left:8px;align-items:center}
.lens{position:absolute;left:138px;top:1px;width:150px;height:22px;background:linear-gradient(#fdfdfd,#d7dae0);border-radius:14px 12px 10px 12px;box-shadow:-1px 1px 1px #888;display:flex;align-items:center;padding-left:7px;box-sizing:border-box}
.sl{position:relative;width:49px;height:12px;margin-left:6px}.sl:before{content:"";position:absolute;left:0;right:0;top:9px;height:2px;background:#5d7cc2}.sl:after{content:"";position:absolute;left:4px;right:10px;top:1px;height:2px;background:repeating-linear-gradient(90deg,#a8acb5 0 2px,transparent 2px 8px)}.th{position:absolute;border:1px solid #222;border-radius:4px;background:linear-gradient(#fff,#c3c6cd);box-sizing:border-box}
.pill{margin-left:8px;display:flex;gap:2px;align-items:center;height:18px;padding:0 4px;border-radius:9px;background:#eef0f3;box-shadow:inset 0 0 2px #777}
.p{height:14px;min-width:17px;box-sizing:border-box;border:1.500px solid #2a2d33;border-radius:7px;background:#fff;font:700 8.500px "Liberation Sans",sans-serif;display:flex;align-items:center;justify-content:center;color:#222}
.mb{position:absolute;right:5px;top:4px;display:flex;gap:1px;align-items:center}
.dis{position:absolute;left:21px;top:2px;width:267px;height:18px;box-sizing:border-box;border-radius:5px;border:1.500px solid #111;background:repeating-linear-gradient(90deg,#21478c 0 1px,#2a5198 1px 2px);box-shadow:inset 0 3px 3px #123068;color:#dce6fa;font-size:10.500px;line-height:15px;padding-left:6px;white-space:nowrap}
.ts{left:132px;top:15px;width:19px;height:6px}.ci{position:absolute;left:292px;top:3px}.mb2{top:3px}
</style>
<div class="w">${sys}<span class="rb">${rb('<svg width="9" height="8"><path d="M4 0L0 4l4 4zM9 0L5 4l4 4z" fill="#222"/></svg>')}${rb('<svg width="9" height="10"><path d="M0 0l9 5-9 5z" fill="#3d66c2"/></svg>')}${rb('<svg width="8" height="8"><path d="M1 0h2v8H1zM5 0h2v8H5z" fill="#222"/></svg>')}${rb('<svg width="8" height="8"><rect width="8" height="8" fill="#222"/></svg>')}${rb('<svg width="9" height="8"><path d="M0 0l4 4-4 4zM5 0l4 4-4 4z" fill="#222"/></svg>')}</span>
 <span class="lens">${rb('<svg width="9" height="9"><path d="M0 3h2l3-3v9L2 6H0z" fill="#222"/><path d="M6 2q2 2.500 0 5" stroke="#222" fill="none"/></svg>',15)}<span class="sl"><span class="th" style="left:37px;top:5px;width:12px;height:7px"></span></span><span class="pill"><span class="p"><svg width="9" height="7"><path d="M4.500 0L9 4H0zM0 5h9v2H0z" fill="#222"/></svg></span><span class="p" style="color:#3763c0">CB</span><span class="p">БМ</span></span></span>
 <span class="mb">${grip}${mm()}${mh()}${mx()}</span></div>
<div class="w b">${sys}<span class="dis">Лигалайз - Жизнь (4:13)</span><span class="th ts"></span><span class="ci">${rb('<svg width="10" height="9"><path d="M0 .5h10M0 3h10M0 5.500h10M0 8h10" stroke="#222" stroke-width="1.200"/></svg>',17)}</span><span class="mb mb2">${grip}${mh()}${mx()}</span></div>`);
</script>
</body></html>
